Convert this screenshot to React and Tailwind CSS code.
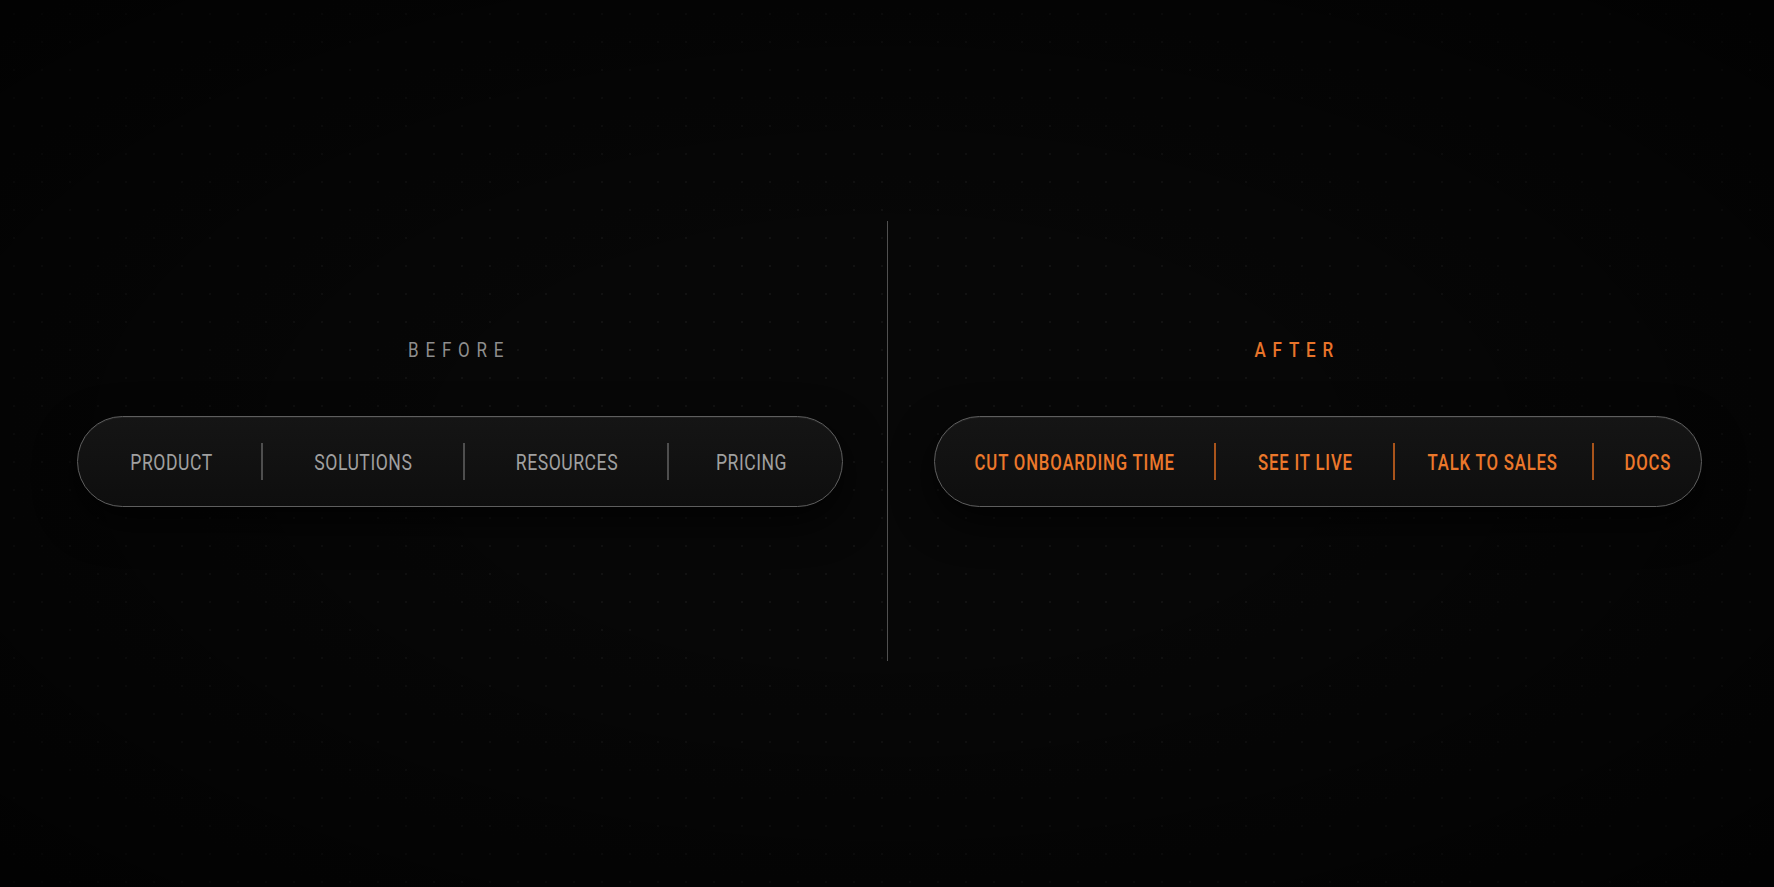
// each item: text, box width; gaps are the left margins of divider / item in turn
const BEFORE = [
  { label: "PRODUCT", w: 80 },
  { label: "SOLUTIONS", w: 98 },
  { label: "RESOURCES", w: 102 },
  { label: "PRICING", w: 70 },
];
const BEFORE_GAPS = ["ml-[49px]", "ml-[51px]", "ml-[51px]", "ml-[51px]", "ml-[49px]", "ml-[48px]"];

const AFTER = [
  { label: "CUT ONBOARDING TIME", w: 194 },
  { label: "SEE IT LIVE", w: 96 },
  { label: "TALK TO SALES", w: 126 },
  { label: "DOCS", w: 42 },
];
const AFTER_GAPS = ["ml-[42px]", "ml-[41px]", "ml-[40px]", "ml-[35px]", "ml-[36px]", "ml-[33px]"];

const WIDTHS = {
  80: "w-[80px]",
  98: "w-[98px]",
  102: "w-[102px]",
  70: "w-[70px]",
  194: "w-[194px]",
  96: "w-[96px]",
  126: "w-[126px]",
  42: "w-[42px]",
};

const font = { fontFamily: 'Roboto, "Liberation Sans", sans-serif' };

function NavPill({ items, gaps, accent, className = "" }) {
  return (
    <div
      className={`flex items-center h-[91px] rounded-full border border-[#5e5e5e] bg-gradient-to-b from-[#151515] to-[#0e0e0e] shadow-[0_14px_40px_rgba(0,0,0,0.75),inset_0_1px_0_rgba(255,255,255,0.05)] ${className}`}
    >
      {items.map((item, i) => (
        <div key={item.label} className="contents">
          {i > 0 && (
            <span
              className={`block w-[2px] h-[37px] ${gaps[i * 2 - 2]} ${
                accent ? "bg-[#a9541b]" : "bg-[#4e4e4e]"
              }`}
            />
          )}
          <span className={`flex justify-center shrink-0 ${WIDTHS[item.w]} ${i > 0 ? gaps[i * 2 - 1] : ""}`}>
            <span
              style={font}
              className={`inline-block translate-y-[1px] text-[22px] leading-none whitespace-nowrap ${
                accent
                  ? "scale-x-[0.76] tracking-[0.05em] text-[#ec782b] font-medium"
                  : "scale-x-[0.8] tracking-[0.03em] text-[#a0a0a0]"
              }`}
            >
              {item.label}
            </span>
          </span>
        </div>
      ))}
    </div>
  );
}

function Label({ children, accent, className = "" }) {
  return (
    <div className={`flex justify-center h-[20px] ${className}`}>
      <span
        style={font}
        className={`inline-block scale-x-[0.85] text-[20px] leading-[20px] tracking-[8px] -mr-[8px] ${
          accent ? "text-[#e8742a] font-medium" : "text-[#8e8e8e]"
        }`}
      >
        {children}
      </span>
    </div>
  );
}

export default function App() {
  return (
    <div className="relative h-[887px] w-full overflow-hidden bg-[#070707]">
      <div className="absolute inset-0 bg-[radial-gradient(circle,rgba(255,255,255,0.045)_1px,transparent_1.5px)] bg-[size:28px_28px]" />
      <div className="absolute inset-0 bg-[radial-gradient(ellipse_at_center,transparent_30%,rgba(0,0,0,0.75)_100%)]" />

      <div className="relative flex items-start h-full">
        {/* before */}
        <div className="w-[887px] pl-[77px] pt-[340px]">
          <Label className="w-[766px] pr-[10px]">BEFORE</Label>
          <NavPill items={BEFORE} gaps={BEFORE_GAPS} className="w-[766px] mt-[56px] pl-[54px]" />
        </div>

        <div className="mt-[221px] w-px h-[440px] bg-[#505050]" />

        {/* after */}
        <div className="flex-1 pl-[46px] pt-[340px]">
          <Label accent className="w-[768px] pr-[49px]">AFTER</Label>
          <NavPill items={AFTER} gaps={AFTER_GAPS} accent className="w-[768px] mt-[56px] pl-[43px]" />
        </div>
      </div>
    </div>
  );
}
